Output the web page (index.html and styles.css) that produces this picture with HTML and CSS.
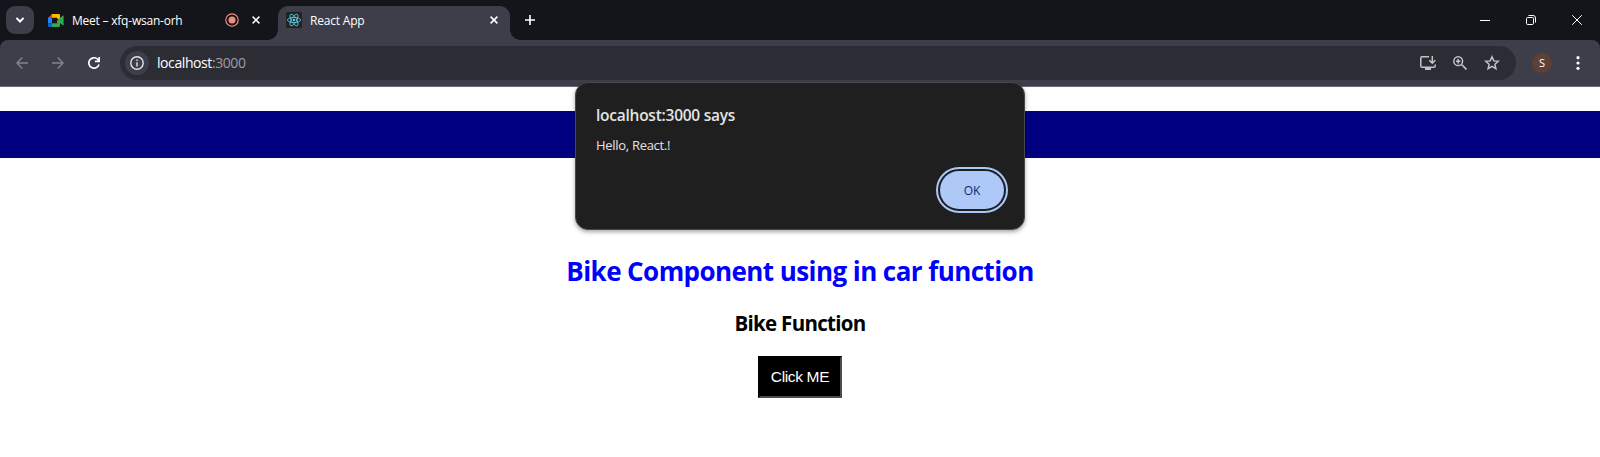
FILE: index.html
```html
<!DOCTYPE html>
<html lang="en">
<head>
<meta charset="utf-8">
<title>React App</title>
<link rel="stylesheet" href="styles.css">
</head>
<body>
<div class="browser">
  <header class="tabstrip">
    <button class="tab-search" aria-label="Search tabs"><svg width="10" height="6" viewBox="0 0 10 6"><path d="M1.4 .9 5 4.5 8.6 .9" fill="none" stroke="#fff" stroke-width="2"/></svg></button>
    <div class="tab tab-meet">
      <svg class="favicon" width="16" height="13" viewBox="0 0 16 14" preserveAspectRatio="none">
        <path d="M0 4 4 0v4z" fill="#ea4335"/><path d="M0 4h4v6H0z" fill="#2684fc"/><path d="M0 10h4v4H1.200Q0 14 0 12.800z" fill="#0066da"/><path d="M4 10h8v2.800Q12 14 10.800 14H4z" fill="#34a853"/><path d="M4 0h6.800Q12 0 12 1.200V7l-3-2.500V4H4z" fill="#ffba00"/><path d="M9 7l6-5.300q.6-.4.600.3v10q0 .7-.6.300L12 9.800V11L9 10z" fill="#34a853"/>
      </svg>
      <span class="tab-title meet-title">Meet – xfq-wsan-orh</span>
      <svg class="record" width="14" height="14" viewBox="0 0 14 14"><circle cx="7" cy="7" r="6.200" fill="none" stroke="#f28b82" stroke-width="1.200"/><circle cx="7" cy="7" r="3.500" fill="#f28b82"/></svg>
      <svg class="close" width="8" height="8" viewBox="0 0 8 8"><path d="M.6.6l6.800 6.800M7.400.6.6 7.400" stroke="#fff" stroke-width="1.500"/></svg>
    </div>
    <div class="tab tab-active">
      <svg class="favicon" width="16" height="16" viewBox="0 0 16 16"><rect width="16" height="16" rx="1.500" fill="#222"/><g fill="none" stroke="#61dafb" stroke-width=".75"><ellipse cx="8" cy="8" rx="6.600" ry="2.600"/><ellipse cx="8" cy="8" rx="6.600" ry="2.600" transform="rotate(60 8 8)"/><ellipse cx="8" cy="8" rx="6.600" ry="2.600" transform="rotate(120 8 8)"/></g><circle cx="8" cy="8" r="1.200" fill="#61dafb"/></svg>
      <span class="tab-title react-title">React App</span>
      <svg class="close" width="8" height="8" viewBox="0 0 8 8"><path d="M.6.6l6.800 6.800M7.400.6.6 7.400" stroke="#fff" stroke-width="1.500"/></svg>
    </div>
    <svg class="new-tab" width="10" height="10" viewBox="0 0 10 10"><path d="M5 0v10M0 5h10" stroke="#fff" stroke-width="1.600"/></svg>
    <div class="window-controls">
      <svg width="10" height="10" viewBox="0 0 10 10"><path d="M0 5.500h10" stroke="#fff"/></svg>
      <svg width="10" height="10" viewBox="0 0 10 10"><rect x=".5" y="2.500" width="7" height="7" rx="1.200" fill="none" stroke="#fff"/><path d="M2.500.5H7q2.500 0 2.500 2.500v4.500" fill="none" stroke="#fff"/></svg>
      <svg width="10" height="10" viewBox="0 0 10 10"><path d="M.2.2l9.600 9.600M9.800.2.2 9.800" stroke="#fff"/></svg>
    </div>
  </header>
  <nav class="toolbar">
    <div class="nav-icons">
      <svg width="12" height="12" viewBox="0 0 12 12"><path d="M12 6H1M6.300.6.9 6l5.400 5.400" fill="none" stroke="#83848c" stroke-width="1.400"/></svg>
      <svg width="12" height="12" viewBox="0 0 12 12"><path d="M0 6h11M5.700.6 11.100 6l-5.400 5.400" fill="none" stroke="#83848c" stroke-width="1.400"/></svg>
      <svg width="12" height="12" viewBox="0 0 12 12"><path d="M11 7.500A5.200 5.200 0 1 1 9.900 2.500L11 3.700M11.200 0v4.300H6.900" fill="none" stroke="#fff" stroke-width="1.700"/></svg>
    </div>
    <div class="omnibox">
      <span class="site-info"><svg width="14" height="14" viewBox="0 0 14 14"><circle cx="7" cy="7" r="6.200" fill="none" stroke="#e3e3e8" stroke-width="1.400"/><path d="M7 6.200v4.200M7 3.400v1.500" stroke="#e3e3e8" stroke-width="1.400"/></svg></span>
      <span class="url">localhost<span class="port">:3000</span></span>
      <div class="omnibox-actions">
        <svg width="16" height="14" viewBox="0 0 16 14"><path d="M9 .8H2Q.8.8.8 2v8q0 1.200 1.200 1.200h12q1.200 0 1.200-1.200V8.500M12.300 0v7M9.300 4.300l3 3 3-3" fill="none" stroke="#c2c2c7" stroke-width="1.500"/><path d="M5 11h6v3H5z" fill="#c2c2c7"/></svg>
        <svg width="14" height="14" viewBox="0 0 14 14"><circle cx="5.200" cy="5.200" r="4.400" fill="none" stroke="#c2c2c7" stroke-width="1.500"/><path d="m8.500 8.500 5 5M5.200 3v4.400M3 5.200h4.400" stroke="#c2c2c7" stroke-width="1.600"/></svg>
        <svg width="16" height="15" viewBox="0 0 16 15"><path d="m8 1.800 1.800 4.100 4.500.4-3.400 3 1 4.400L8 11.400l-3.900 2.300 1-4.400-3.400-3 4.500-.4z" fill="none" stroke="#c2c2c7" stroke-width="1.500"/></svg>
      </div>
    </div>
    <span class="avatar">S</span>
    <svg class="menu" width="4" height="14" viewBox="0 0 4 14"><g fill="#fff"><circle cx="2" cy="1.700" r="1.600"/><circle cx="2" cy="7" r="1.600"/><circle cx="2" cy="12.300" r="1.600"/></g></svg>
  </nav>
  <main class="page">
    <div class="banner"></div>
    <h1 class="heading">Bike Component using in car function</h1>
    <h3 class="subheading">Bike Function</h3>
    <button class="click-me">Click ME</button>
  </main>
  <div class="dialog" role="alertdialog">
    <div class="dialog-title">localhost:3000 says</div>
    <div class="dialog-text">Hello, React.!</div>
    <button class="ok">OK</button>
  </div>
</div>
</body>
</html>
```
FILE: styles.css
```css
* { box-sizing: border-box; }
body { margin: 0; background: #fff; font-family: "Open Sans", "Noto Sans", sans-serif; overflow: hidden; }
svg { display: block; flex: none; }
button { font: inherit; border: 0; padding: 0; }
.browser { position: relative; width: 1600px; height: 457px; background: linear-gradient(#14151a, #14151a) 0 0 / 100% 60px no-repeat #fff; }

.tabstrip { display: flex; align-items: flex-start; height: 40px; padding: 6px 18px 0 6px; }
.tab-search { display: flex; align-items: center; justify-content: center; width: 28px; height: 28px; border-radius: 9px; background: #3d3e4a; }
.tab { display: flex; align-items: center; height: 28px; color: #fff; font-size: 12px; white-space: nowrap; }
.tab-meet { width: 244px; padding: 0 18px 0 14px; }
.tab-title { margin-left: 8px; }
.record { margin-left: auto; }
.tab-meet .close { margin-left: 13px; }
.tab-active { position: relative; width: 232px; height: 34px; padding: 0 12px 6px 8px; border-radius: 10px 10px 0 0; background: #3d3e4a; }
.tab-active::before, .tab-active::after { content: ""; position: absolute; bottom: 0; width: 10px; height: 10px; }
.tab-active::before { left: -10px; background: radial-gradient(circle at 0 0, transparent 9.500px, #3d3e4a 10px); }
.tab-active::after { right: -10px; background: radial-gradient(circle at 100% 0, transparent 9.500px, #3d3e4a 10px); }
.tab-active .close { margin-left: auto; }
.new-tab { margin: 9px 0 0 15px; }
.window-controls { display: flex; gap: 36px; margin: 9px 0 0 auto; }
.meet-title { letter-spacing: -.22px; }
.react-title { letter-spacing: -.2px; }

.toolbar { display: flex; align-items: center; height: 47px; padding: 0 20px 1px 16px; border-bottom: 1px solid #696a74; border-radius: 8px 8px 0 0; background: #3d3e4a; }
.nav-icons { display: flex; gap: 24px; width: 104px; }
.omnibox { display: flex; align-items: center; width: 1396px; height: 34px; padding: 0 16px 0 5px; border-radius: 17px; background: #2c2c35; }
.site-info { display: grid; place-items: center; width: 24px; height: 24px; border-radius: 12px; background: #3d3e4a; }
.url { margin-left: 8px; color: #fff; font-size: 14px; letter-spacing: -.42px; }
.port { color: #9c9ca4; }
.omnibox-actions { display: flex; align-items: center; gap: 17px; margin-left: auto; }
.avatar { display: grid; place-items: center; width: 20px; height: 20px; margin-left: 16px; border-radius: 50%; background: #5d4037; color: #fff; font-size: 11px; line-height: 20px; }
.menu { margin-left: 24px; }

.page { display: flex; flex-direction: column; align-items: center; height: 370px; padding-top: 24px; background: #fff; }
.banner { width: 100%; height: 47px; background: navy; }
.heading { margin: 95px 0 0; color: #00f; font-size: 26px; line-height: 36px; font-weight: 700; letter-spacing: -.57px; }
.subheading { margin: 20px 0 0; color: #000; font-size: 20.500px; line-height: 28px; font-weight: 700; letter-spacing: -.7px; }
.click-me { width: 84px; height: 42px; margin-top: 19px; border: 2px solid; border-color: #000 #4c4c4c #4c4c4c #000; background: #000; color: #fff; font: 15.500px "Liberation Sans", sans-serif; letter-spacing: -.35px; }

.dialog { position: absolute; left: 575px; top: 82px; display: flex; flex-direction: column; align-items: flex-start; width: 450px; height: 148px; padding: 21px 20px 0 20px; border: 1px solid #48484b; border-radius: 13px; background: #1f1f1f; box-shadow: 0 2px 4px rgba(0,0,0,.35); color: #e3e3e3; }
.dialog-title { font-size: 15.500px; line-height: 22px; font-weight: 600; letter-spacing: -.25px; }
.dialog-text { margin-top: 10px; font-size: 13px; line-height: 18px; letter-spacing: -.3px; }
.ok { align-self: flex-end; width: 64px; height: 38px; margin-top: 17px; border-radius: 19px; background: #aec9f7; color: #062e6f; outline: 2px solid #a8c7fa; outline-offset: 2px; font-size: 12px; font-weight: 500; }
```
